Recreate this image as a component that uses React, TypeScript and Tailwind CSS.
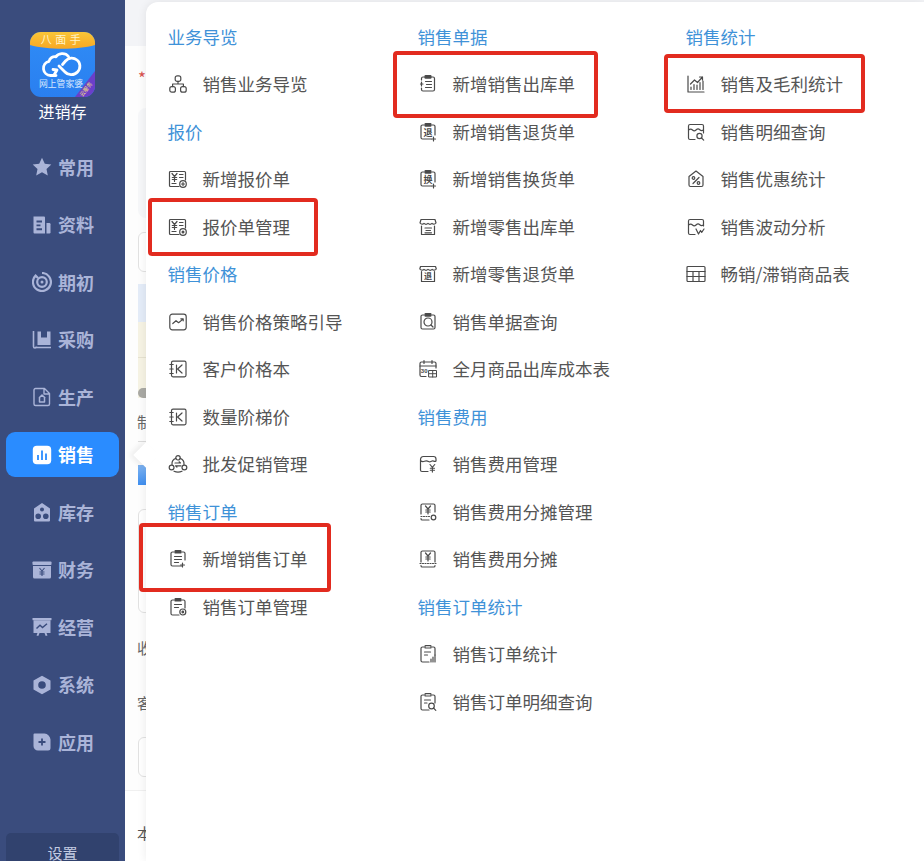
import React from "react";

const FONT = "font-['Noto_Sans_CJK_SC','Noto_Sans',sans-serif]";

const Svg = ({ children }: { children: React.ReactNode }) => (
  <svg viewBox="0 0 20 20" fill="none" stroke="currentColor" strokeWidth="1.2" strokeLinecap="round" strokeLinejoin="round" className="w-5 h-5 shrink-0 text-[#4a4a4a]">
    {children}
  </svg>
);

const Yen = ({ x = 5.5, y = 5, s = 1 }: { x?: number; y?: number; s?: number }) => (
  <path transform={`translate(${x} ${y}) scale(${s})`} d="M0 0l2.5 3L5 0M2.5 3v5M.3 4h4.4M.3 6h4.4" />
);

const Glyph = ({ t, x, y, size }: { t: string; x: number; y: number; size: number }) => (
  <text x={x} y={y} textAnchor="middle" fontSize={size} fill="currentColor" stroke="none" fontWeight="700" fontFamily="'Noto Sans CJK SC',sans-serif">{t}</text>
);

const Clip = ({ tall = false, open = false }: { tall?: boolean; open?: boolean }) => (
  <>
    <path d={tall ? "M6 3H4.5A1.5 1.5 0 0 0 3 4.5v12A1.5 1.5 0 0 0 4.5 18H11" : "M6 3H4.5A1.5 1.5 0 0 0 3 4.5v11A1.5 1.5 0 0 0 4.5 17H14"} />
    <path d="M14 3h1.5A1.5 1.5 0 0 1 17 4.5V11" />
    <rect x="7" y="1.6" width="6" height="2.4" rx=".6" fill={open ? "none" : "currentColor"} />
  </>
);

const icons: Record<string, React.ReactNode> = {
  network: (
    <Svg>
      <rect x="7.2" y="1.8" width="5.6" height="5.6" rx="2" />
      <rect x="1.8" y="12.6" width="5.6" height="5.6" rx="2" />
      <rect x="12.6" y="12.6" width="5.6" height="5.6" rx="2" />
      <path d="M10 7.4V10M4.6 12.6V10h10.8v2.6" />
    </Svg>
  ),
  quoteAdd: (
    <Svg>
      <path d="M11 17.5H2.5a1 1 0 0 1-1-1v-13a1 1 0 0 1 1-1h14a1 1 0 0 1 1 1V11" />
      <Yen x={4} y={4.5} />
      <path d="M11.5 5.5h3.5M11.5 8.5h3.5M4 14.5h4" />
      <circle cx="15" cy="15" r="3.3" />
      <path d="M13.5 15h3M15 13.5v3" />
    </Svg>
  ),
  quoteManage: (
    <Svg>
      <path d="M11 17.5H2.5a1 1 0 0 1-1-1v-13a1 1 0 0 1 1-1h14a1 1 0 0 1 1 1V11" />
      <Yen x={4} y={4.5} />
      <path d="M11.5 5.5h3.5M11.5 8.5h3.5M4 14.5h4" />
      <circle cx="15" cy="15" r="3.3" />
      <circle cx="15" cy="15" r=".9" fill="currentColor" />
    </Svg>
  ),
  trend: (
    <Svg>
      <rect x="1.8" y="2.2" width="16.4" height="15.6" rx="2.5" />
      <path d="M4.8 11.5l3.2-2.8 2.6 2 4.4-3.6M12.8 6.8h2.4v2" />
    </Svg>
  ),
  book: (
    <Svg>
      <path d="M5 2.2h11.500a1.500 1.500 0 0 1 1.500 1.500v12.600a1.500 1.500 0 0 1-1.500 1.500H5a1.500 1.500 0 0 1-1.500-1.500V3.700A1.500 1.500 0 0 1 5 2.200z" />
      <path d="M1.800 5.500h3.400M1.800 10h3.400M1.800 14.500h3.400" />
      <path d="M8.500 6v8M14 6l-4.400 4 4.400 4" />
    </Svg>
  ),
  promo: (
    <Svg>
      <circle cx="10" cy="3.800" r="2.200" />
      <path d="M7.900 4.400C5.200 5.300 3.800 7.800 4 10.500M12.100 4.400c2.700.9 4.100 3.400 3.900 6.100M6 17.200c2.400 1 5.600 1 8 0" />
      <circle cx="3.600" cy="13.500" r="2.400" />
      <circle cx="16.400" cy="13.500" r="2.400" />
      <path d="M7 9h5.500l-1.400-1.200M13 11.800H7.500l1.400 1.200" />
    </Svg>
  ),
  orderAdd: (
    <Svg>
      <Clip />
      <path d="M6.5 7.5h7M6.5 10.5h7M6.5 13.5h4M14.5 14v4M12.5 16h4" />
    </Svg>
  ),
  orderManage: (
    <Svg>
      <Clip tall />
      <path d="M6.5 7.5h7M6.5 10.5h4" />
      <circle cx="14.8" cy="15" r="3" />
      <circle cx="14.8" cy="15" r=".8" fill="currentColor" />
    </Svg>
  ),
  outStock: (
    <Svg>
      <path d="M3.5 6V4.5A1.5 1.5 0 0 1 5 3h1.5M13.5 3H15a1.5 1.5 0 0 1 1.500 1.500v11A1.500 1.500 0 0 1 15 17H5a1.500 1.500 0 0 1-1.500-1.500V14M3.500 8v4" />
      <rect x="7" y="1.700" width="6" height="2.400" rx=".6" fill="currentColor" />
      <path d="M7.500 7.500h6M8.500 10.500h5M7.500 13.500h6M2.500 10h2.500" />
    </Svg>
  ),
  returnAdd: (
    <Svg>
      <path d="M6 3H4.500A1.500 1.500 0 0 0 3 4.500v11A1.500 1.500 0 0 0 4.500 17H13M14 3h1.500A1.500 1.500 0 0 1 17 4.500V13" />
      <rect x="7" y="1.700" width="6" height="2.400" rx=".6" fill="currentColor" />
      <Glyph t="退" x={10} y={13.500} size={9} />
      <path d="M15.500 15v4M13.500 17h4" />
    </Svg>
  ),
  exchangeAdd: (
    <Svg>
      <path d="M6 3H4.500A1.500 1.500 0 0 0 3 4.500v11A1.500 1.500 0 0 0 4.500 17H13M14 3h1.500A1.500 1.500 0 0 1 17 4.500V13" />
      <rect x="7" y="1.700" width="6" height="2.400" rx=".6" fill="currentColor" />
      <Glyph t="换" x={10} y={13.500} size={9} />
      <path d="M15.500 15v4M13.500 17h4" />
    </Svg>
  ),
  retail: (
    <Svg>
      <path d="M3 2.500h14l1 3.500c-1.200 1.500-3 1.500-4 .4-1.200 1.100-2.800 1.100-4 0-1.200 1.100-2.800 1.100-4 0-1 1.100-2.800 1.100-4-.4zM3.500 9v8.500h13V9" />
      <path d="M7 11h6.500M8 13.500h4.500M7 15.800h6.500" />
    </Svg>
  ),
  retailReturn: (
    <Svg>
      <path d="M2.500 2.500h15l.8 2.500c-1.200 1.500-3 1.500-4.100.4-1.200 1.100-2.800 1.100-4.200 0-1.200 1.100-2.800 1.100-4 0-1.100 1.100-3 1.100-4.200-.4zM3.500 7.500v10h13v-10" />
      <Glyph t="退" x={10} y={15.300} size={8} />
    </Svg>
  ),
  query: (
    <Svg>
      <path d="M6 3H4.500A1.500 1.500 0 0 0 3 4.500v11A1.500 1.500 0 0 0 4.500 17H15.500A1.500 1.500 0 0 0 17 15.500v-11A1.500 1.500 0 0 0 15.500 3H14" />
      <rect x="7" y="1.700" width="6" height="2.400" rx=".6" fill="currentColor" />
      <circle cx="10" cy="10" r="4" />
      <path d="M13 13l2 2" />
    </Svg>
  ),
  calendar: (
    <Svg>
      <path d="M8 17.500H3.500a1.500 1.500 0 0 1-1.500-1.500V4.500A1.500 1.500 0 0 1 3.500 3h13A1.500 1.500 0 0 1 18 4.500V9" />
      <path d="M6 1.500v3M14 1.500v3M2 7h16" />
      <text x="2.800" y="14" fontSize="6" fill="currentColor" stroke="none" fontWeight="700" fontFamily="'Liberation Sans',sans-serif">30</text>
      <path d="M11 11.500h7.500v6.500H11zM11 14.700h7.500M14.700 11.500V18" strokeWidth="1" />
    </Svg>
  ),
  feeManage: (
    <Svg>
      <path d="M2.500 6c0-2 1-3.500 3-3.500h10c1.500 0 2.500 1 2.500 2.500v2c-1.500 1.200-2.500-.5-4 0s-2 1.500-3.500.5-2.500-1-4-.3-2.500.8-4-.7zM2.500 6v10a1.500 1.500 0 0 0 1.500 1.500h6" />
      <Yen x={12} y={10.500} s={0.95} />
    </Svg>
  ),
  feeShareManage: (
    <Svg>
      <path d="M3 12V3.500A1.500 1.500 0 0 1 4.500 2h11A1.500 1.500 0 0 1 17 3.500V10" />
      <Yen x={7.500} y={4} />
      <path d="M3 14.500h9" strokeDasharray="1 1.500" />
      <path d="M3 16.500v.2A1.300 1.300 0 0 0 4.300 18H11" />
      <circle cx="15.500" cy="15.500" r="2.300" />
    </Svg>
  ),
  feeShare: (
    <Svg>
      <path d="M3 13V3.500A1.500 1.500 0 0 1 4.500 2h11A1.500 1.500 0 0 1 17 3.500V13" />
      <Yen x={7.500} y={4} />
      <path d="M2 14.500h16" strokeDasharray="1 1.500" />
      <path d="M3 16.500v.2A1.300 1.300 0 0 0 4.300 18h11.400a1.300 1.300 0 0 0 1.300-1.300v-.2" />
    </Svg>
  ),
  orderStat: (
    <Svg>
      <Clip tall open />
      <path d="M6.500 8h6M6.500 11h3M13 18v-3M15 18v-5M17 18v-7" />
    </Svg>
  ),
  orderDetail: (
    <Svg>
      <Clip tall open />
      <path d="M6.500 8h6M6.500 11h2.500" />
      <circle cx="13.500" cy="14" r="2.800" />
      <path d="M15.500 16l2.300 2.300" />
    </Svg>
  ),
  profit: (
    <Svg>
      <path d="M2 2v16h16" />
      <path d="M4.500 10l4-4 3 2.500L16.500 3M13.500 3h3v3M5 15.500V13M8 15.500v-5M11 15.500V11M14 15.500V8.500M17 15.500V7" />
    </Svg>
  ),
  saleDetail: (
    <Svg>
      <path d="M9 17.500H4A1.500 1.500 0 0 1 2.500 16V4A1.500 1.500 0 0 1 4 2.500h12A1.500 1.500 0 0 1 17.500 4v7" />
      <path d="M2.500 8c2-1.500 3-1 4 0s2.500 1 3.500 0 2.500-1.500 3.500-.5 2.500 1.500 4 .5" />
      <circle cx="13.500" cy="14" r="2.600" />
      <path d="M15.500 16l2.200 2.200" />
    </Svg>
  ),
  discount: (
    <Svg>
      <path d="M3 7.500L10 2l7 5.500V16a1.500 1.500 0 0 1-1.500 1.500h-11A1.500 1.500 0 0 1 3 16z" />
      <circle cx="7.500" cy="9" r="1.300" />
      <circle cx="12.500" cy="14" r="1.300" />
      <path d="M13 8.500l-6 6" />
    </Svg>
  ),
  wave: (
    <Svg>
      <path d="M9 17.500H4A1.500 1.500 0 0 1 2.500 16V4A1.500 1.500 0 0 1 4 2.500h12A1.500 1.500 0 0 1 17.500 4v5" />
      <path d="M2.500 8c2-1.500 3-1 4 0s2.500 1 3.500 0 2.500-1.500 3.500-.5 2.500 1.500 4 .5" />
      <path d="M10 12l2.500 5 2-3.500 1.200 1.800 2.300-3.300" />
    </Svg>
  ),
  table: (
    <Svg>
      <rect x="1" y="2.500" width="18" height="15" rx="1" />
      <path d="M1 7.500h18M1 12.500h18M7 7.500v10M13 7.500v10" />
    </Svg>
  ),
};

type Row = { t: string; i?: string };

const col1: Row[] = [
  { t: "业务导览" },
  { t: "销售业务导览", i: "network" },
  { t: "报价" },
  { t: "新增报价单", i: "quoteAdd" },
  { t: "报价单管理", i: "quoteManage" },
  { t: "销售价格" },
  { t: "销售价格策略引导", i: "trend" },
  { t: "客户价格本", i: "book" },
  { t: "数量阶梯价", i: "book" },
  { t: "批发促销管理", i: "promo" },
  { t: "销售订单" },
  { t: "新增销售订单", i: "orderAdd" },
  { t: "销售订单管理", i: "orderManage" },
];
const col2: Row[] = [
  { t: "销售单据" },
  { t: "新增销售出库单", i: "outStock" },
  { t: "新增销售退货单", i: "returnAdd" },
  { t: "新增销售换货单", i: "exchangeAdd" },
  { t: "新增零售出库单", i: "retail" },
  { t: "新增零售退货单", i: "retailReturn" },
  { t: "销售单据查询", i: "query" },
  { t: "全月商品出库成本表", i: "calendar" },
  { t: "销售费用" },
  { t: "销售费用管理", i: "feeManage" },
  { t: "销售费用分摊管理", i: "feeShareManage" },
  { t: "销售费用分摊", i: "feeShare" },
  { t: "销售订单统计" },
  { t: "销售订单统计", i: "orderStat" },
  { t: "销售订单明细查询", i: "orderDetail" },
];
const col3: Row[] = [
  { t: "销售统计" },
  { t: "销售及毛利统计", i: "profit" },
  { t: "销售明细查询", i: "saleDetail" },
  { t: "销售优惠统计", i: "discount" },
  { t: "销售波动分析", i: "wave" },
  { t: "畅销/滞销商品表", i: "table" },
];

const Column = ({ rows, cls }: { rows: Row[]; cls: string }) => (
  <div className={`flex flex-col shrink-0 ${cls}`}>
    {rows.map((r, k) =>
      r.i ? (
        <div key={k} className="h-[47.5px] flex items-center gap-[15px] text-[17.5px] text-[#555555] whitespace-nowrap">
          {icons[r.i]}
          <span>{r.t}</span>
        </div>
      ) : (
        <div key={k} className="h-[47.5px] flex items-center text-[17.5px] text-[#3f92d8] whitespace-nowrap">
          {r.t}
        </div>
      )
    )}
  </div>
);

const nf = { fill: "currentColor", stroke: "none" };
const NavSvg = ({ children, active }: { children: React.ReactNode; active?: boolean }) => (
  <svg viewBox="0 0 20 20" className={`w-5 h-5 shrink-0 ${active ? "text-white" : "text-[#aab4d8]"}`}>{children}</svg>
);

const nav: { t: string; active?: boolean; icon: React.ReactNode }[] = [
  { t: "常用", icon: <path {...nf} d="M10 .8l2.800 6 6.500.8-4.800 4.400 1.300 6.400L10 15.200l-5.800 3.200 1.300-6.400L.7 7.600l6.500-.8z" /> },
  {
    t: "资料",
    icon: (
      <>
        <path {...nf} fillRule="evenodd" d="M1.500 1.500h10.500a1 1 0 0 1 1 1V18.500H2.500a1 1 0 0 1-1-1zM4.500 5.500v2h5.500v-2zM4.500 9.500v1.800h4v-1.800zM4.500 13.200v2h5.500v-2z" />
        <path {...nf} d="M14.500 8h2.800a1.200 1.200 0 0 1 1.200 1.200v8.100a1.200 1.200 0 0 1-1.200 1.200h-2.800z" />
      </>
    ),
  },
  {
    t: "期初",
    icon: (
      <>
        <path d="M10 1a9 9 0 1 1-6.400 2.600L6 6" fill="none" stroke="currentColor" strokeWidth="2.200" />
        <circle cx="10" cy="10" r="4.800" fill="none" stroke="currentColor" strokeWidth="2.200" />
        <circle cx="10" cy="10" r="1.500" {...nf} />
      </>
    ),
  },
  {
    t: "采购",
    icon: (
      <>
        <path d="M1.500 1v15.500a1.500 1.500 0 0 0 3 0M3 17.500h16" fill="none" stroke="currentColor" strokeWidth="1.600" />
        <path {...nf} fillRule="evenodd" d="M5.500 1.500h13v13.500h-13zM9 1.500v6h6v-6z" />
      </>
    ),
  },
  {
    t: "生产",
    icon: (
      <>
        <path d="M3.500 1.500h9l5 5v10.500a1.500 1.500 0 0 1-1.500 1.500H3.500A1.500 1.500 0 0 1 2 17V3a1.500 1.500 0 0 1 1.500-1.500zM12 2v5h5" fill="none" stroke="currentColor" strokeWidth="1.400" strokeLinejoin="round" />
        <path d="M7 11l3-3 3.200 3M7.500 10.500v4.500h5v-4.500" fill="none" stroke="currentColor" strokeWidth="1.500" strokeLinejoin="round" />
      </>
    ),
  },
  {
    t: "销售",
    active: true,
    icon: (
      <>
        <rect x=".8" y=".8" width="18.400" height="18.400" rx="4" {...nf} />
        <path d="M6 10v5M10 5.500v9.500M14 8.500v6.500" fill="none" stroke="#2a8cff" strokeWidth="1.800" />
      </>
    ),
  },
  {
    t: "库存",
    icon: (
      <path {...nf} fillRule="evenodd" d="M10 1l8 5.500v12a1 1 0 0 1-1 1H3a1 1 0 0 1-1-1v-12zM10 5.500a2 2 0 1 0 0 4 2 2 0 0 0 0-4zM6.200 11.500a2.800 2.800 0 1 0 0 5.600 2.800 2.800 0 0 0 0-5.600zM13.800 11.500a2.800 2.800 0 1 0 0 5.600 2.800 2.800 0 0 0 0-5.600z" />
    ),
  },
  {
    t: "财务",
    icon: (
      <>
        <rect x="0.500" y="1.500" width="19" height="3.500" rx=".8" {...nf} />
        <path {...nf} fillRule="evenodd" d="M1 6h18v11a1.500 1.500 0 0 1-1.500 1.500h-15A1.500 1.500 0 0 1 1 17z" />
        <path d="M7.500 8l2.500 3 2.500-3M10 11v5M7.500 12h5M7.500 14h5" fill="none" stroke="#3a4c7d" strokeWidth="1.100" />
      </>
    ),
  },
  {
    t: "经营",
    icon: (
      <>
        <rect x=".5" y="1" width="19" height="2.200" {...nf} />
        <path {...nf} d="M1.500 3.200h17v12.800h-4l1 2.500-1.800.5-1.200-3H7.500l-1.200 3-1.800-.5 1-2.500h-4z" />
        <path d="M4.500 11.500l3.500-3.200 2.500 2.200 4.500-3.800" fill="none" stroke="#3a4c7d" strokeWidth="1.500" />
      </>
    ),
  },
  {
    t: "系统",
    icon: <path {...nf} fillRule="evenodd" d="M10 .8l8.500 4.600v9.200L10 19.200l-8.500-4.600V5.400zM10 6.200a3.800 3.800 0 1 0 0 7.600 3.800 3.800 0 0 0 0-7.600z" />,
  },
  {
    t: "应用",
    icon: (
      <>
        <path {...nf} d="M2.500 1.500h10a6.500 6.500 0 0 1 6 6v8.500a2.500 2.500 0 0 1-2.500 2.500H6A4.500 4.500 0 0 1 1.500 14V2.500a1 1 0 0 1 1-1z" />
        <path d="M10 6.500v7M6.500 10h7" fill="none" stroke="#3a4c7d" strokeWidth="1.800" />
      </>
    ),
  },
];

const Logo = () => (
  <svg viewBox="0 0 65 65" className="w-[65px] h-[65px]">
    <defs>
      <linearGradient id="lb" x1="0" y1="0" x2="0" y2="1">
        <stop offset="0" stopColor="#2f8cf6" />
        <stop offset="1" stopColor="#2a7ff0" />
      </linearGradient>
      <linearGradient id="ly" x1="0" y1="0" x2="0" y2="1">
        <stop offset="0" stopColor="#f9c538" />
        <stop offset="1" stopColor="#f7a824" />
      </linearGradient>
      <clipPath id="lc"><rect width="65" height="65" rx="11" /></clipPath>
    </defs>
    <g clipPath="url(#lc)">
      <rect width="65" height="65" fill="url(#lb)" />
      <path d="M0 0h65v13c-18 5-47 5-65 0z" fill="url(#ly)" />
      <path d="M65 39V65H45z" fill="#6b3fc8" />
      <path d="M26 43.500h-5.500a7.200 7.200 0 0 1-1.500-14.200c.8-3.500 4-5.200 7-4.500 2-3.500 9-4.800 12.500-.3M24 43l3-5-4-.5M29 34l6 6c2.500 3 9 4 12.500 0 3.500-3.600 3-9.400-.5-12-3.500-2.800-8.500-2.500-11.500 1l-3 3.500" fill="none" stroke="#fff" strokeWidth="2.800" strokeLinejoin="round" strokeLinecap="round" />
      <text x="32.500" y="11.500" textAnchor="middle" fontSize="11" fill="#fff3c8" letterSpacing="3.500" fontFamily="'Noto Sans CJK SC',sans-serif">八面手</text>
      <text x="31" y="54.500" textAnchor="middle" fontSize="8.800" fill="#d7e7fd" fontFamily="'Noto Sans CJK SC',sans-serif">网上管家婆</text>
      <text x="0" y="0" transform="translate(57.500 58.500) rotate(-52)" textAnchor="middle" fontSize="5.500" fill="#f7e27a" fontFamily="'Noto Sans CJK SC',sans-serif">云服务</text>
    </g>
  </svg>
);

const Mark = ({ cls }: { cls: string }) => (
  <div className={`absolute border-[4px] border-[#e22b1f] rounded-[4px] pointer-events-none ${cls}`} />
);

export default function App() {
  return (
    <div className={`relative w-[924px] h-[861px] overflow-hidden flex bg-white ${FONT}`}>
      {/* sidebar */}
      <aside className="w-[125px] h-full shrink-0 bg-[#3a4c7d] flex flex-col items-stretch pt-[32px]">
        <div className="flex justify-center"><Logo /></div>
        <div className="h-[27px] flex items-center justify-center text-white text-[16px]">进销存</div>
        <nav className="mt-[14.5px] flex flex-col">
          {nav.map((n) => (
            <div key={n.t} className="h-[57.5px] flex items-center px-[6px]">
              <div className={`w-full h-[45px] rounded-[9px] flex items-center gap-[6px] pl-[26px] ${n.active ? "bg-[#2a8cff]" : ""}`}>
                <NavSvg active={n.active}>{n.icon}</NavSvg>
                <span className={`text-[18px] font-bold ${n.active ? "text-white" : "text-[#aab4d8]"}`}>{n.t}</span>
              </div>
            </div>
          ))}
        </nav>
        <div className="mt-auto mx-[6px] h-[28px] rounded-t-[5px] bg-[#31426e] flex items-center justify-center pt-[12px] text-[15px] leading-[16px] text-[#c3cbe2]">设置</div>
      </aside>

      {/* page behind the flyout */}
      <main className="flex-1 min-w-0 flex flex-col overflow-hidden">
        <div className="h-[46px] shrink-0 bg-[#f3f4f7]" />
        <div className="h-[744px] shrink-0 pl-[13px] flex flex-col text-[15px] text-[#666666] bg-[#fdfdfd] whitespace-nowrap">
          <div className="h-[62px] pt-[22px] text-[#d9534f] text-[17px] leading-[20px]">*</div>
          <div className="h-[110px] w-[200px] rounded-[8px] bg-[#f6f7f9]" />
          <div className="mt-[14px] h-[40px] w-[200px] rounded-[6px] border border-[#e2e2e2] bg-white" />
          <div className="mt-[12px] h-[38px] w-[200px] bg-[#e4ecf8]" />
          <div className="h-[36px] w-[200px] bg-[#f6f3e4] border-b border-[#e6e2d0]" />
          <div className="h-[30px] w-[200px] bg-[#f6f3e4]" />
          <div className="h-[10px] w-[200px] bg-[#f6f3e4] flex">
            <div className="w-[16px] h-[10px] rounded-full bg-[#a9a9a4]" />
          </div>
          <div className="mt-[10px] h-[28px] leading-[28px] -ml-[1px]">制</div>
          <div className="mt-[5px] h-px w-[200px] bg-[#dddddd]" />
          <div className="mt-[23px] h-[20px] w-[200px] bg-[linear-gradient(to_bottom,#7fb4f2,#3f8ff0)]" />
          <div className="mt-[24px] h-[104px] w-[200px] rounded-[6px] border border-[#e2e2e2] bg-white" />
          <div className="mt-[24px] h-[22px] leading-[22px] -ml-[1px]">收</div>
          <div className="mt-[33px] h-[22px] leading-[22px] -ml-[1px]">客</div>
          <div className="mt-[23px] h-[40px] w-[200px] rounded-[6px] border border-[#e2e2e2] bg-white" />
        </div>
        <div className="flex-1 bg-white pl-[12px] pt-[31px] text-[15px] leading-[22px] text-[#555555] border-t border-[#f0f0f0] whitespace-nowrap">本</div>
      </main>

      {/* flyout */}
      <div className="absolute left-[146px] top-[2px] right-0 bottom-0 bg-white rounded-tl-[12px] shadow-[0_0_10px_rgba(0,0,0,0.08)] flex pt-[11px] pl-[21.5px]">
        <Column rows={col1} cls="w-[250px]" />
        <Column rows={col2} cls="w-[268px]" />
        <Column rows={col3} cls="w-[200px]" />
        <div className="absolute left-[-9px] top-[444px] w-[18px] h-[18px] rotate-45 bg-white shadow-[-3px_3px_5px_rgba(0,0,0,0.06)]" />
      </div>

      {/* annotations */}
      <Mark cls="left-[148px] top-[198px] w-[170px] h-[58px]" />
      <Mark cls="left-[139px] top-[523px] w-[192px] h-[69px]" />
      <Mark cls="left-[393px] top-[51px] w-[205px] h-[67px]" />
      <Mark cls="left-[664px] top-[54px] w-[201px] h-[59px]" />
    </div>
  );
}
